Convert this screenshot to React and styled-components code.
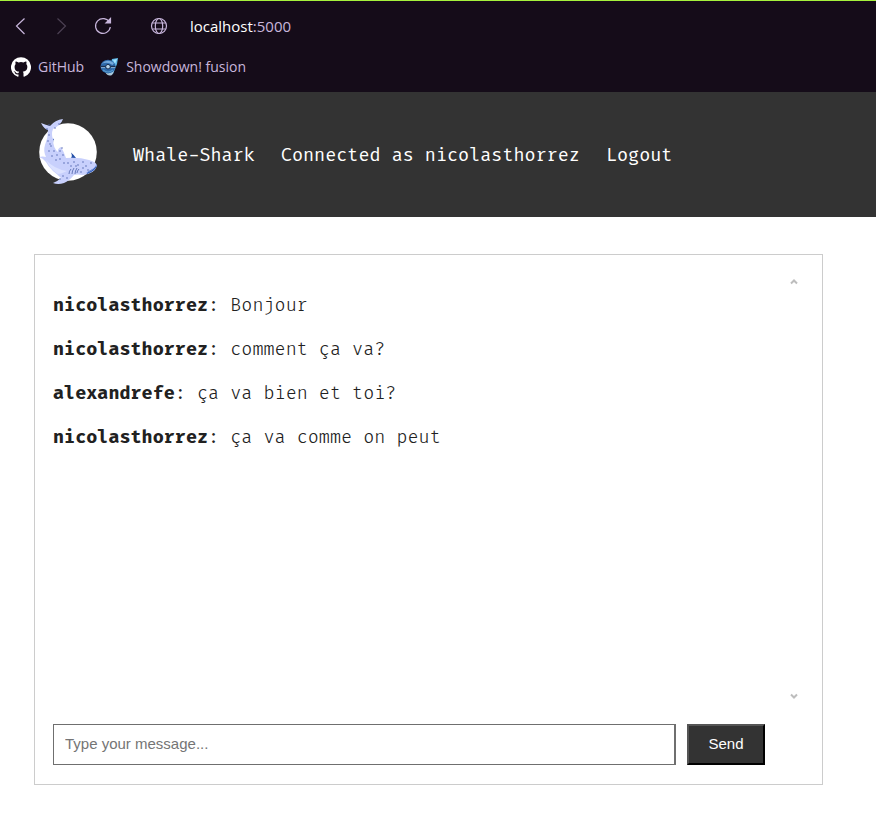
import React from "react";
import styled, { createGlobalStyle } from "styled-components";

const GlobalStyle = createGlobalStyle`
  * { box-sizing: border-box; }
  body { margin: 0; background: #fff; color: #212121; }
`;

const ui = `"Segoe UI", "Open Sans", "Noto Sans", sans-serif`;
const mono = `"Fira Code", "DejaVu Sans Mono", monospace`;

const Chrome = styled.div`
  background: #150c19;
  border-top: 1px solid #a6f23c;
  font-family: ${ui};
  font-size: 15px;
  line-height: 20px;
  color: #c8b6dc;
`;

const Toolbar = styled.div`
  display: flex;
  align-items: center;
  height: 50px;
  padding: 0 12px;
`;

const ToolButton = styled.button`
  display: flex;
  width: 18px;
  height: 18px;
  padding: 0;
  margin-right: ${(p) => p.$gap}px;
  border: 0;
  background: none;
  color: ${(p) => (p.disabled ? "#4c4153" : "#c8b6dc")};
`;

const Address = styled.div`
  margin-left: 4px;
  color: #c8b6dc;
`;

const Host = styled.span`
  color: #fff;
`;

const Bookmarks = styled.nav`
  display: flex;
  gap: 16px;
  height: 41px;
  padding: 6px 11px 0;
`;

const Bookmark = styled.a`
  display: flex;
  align-items: center;
  gap: 7px;
  height: 20px;
  color: inherit;
  font-size: 14px;
  text-decoration: none;
`;

const Header = styled.header`
  display: flex;
  align-items: center;
  min-height: 125px;
  padding: 0 34px;
  background: #333;
`;

const HomeLink = styled.a`
  display: flex;
  width: 74px;
  padding-bottom: 8px;
`;

const Menu = styled.nav`
  display: flex;
  gap: 26px;
  margin-left: 25px;
  padding-top: 2px;
  font-family: ${mono};
  font-feature-settings: "ss01";
  font-size: 18px;
  line-height: 24px;
  color: #fff;
`;

const MenuLink = styled.a`
  color: inherit;
  text-decoration: none;
`;

const Chat = styled.main`
  margin: 37px 53px 37px 34px;
  padding: 18px 18px 19px;
  border: 1px solid #ccc;
`;

const Messages = styled.section`
  display: flex;
  justify-content: space-between;
  height: 433px;
  margin-bottom: 18px;
`;

const MessageList = styled.ul`
  display: flex;
  flex-direction: column;
  gap: 20px;
  margin: 0;
  padding: 21px 0 0;
  list-style: none;
  font-family: ${mono};
  font-feature-settings: "ss01";
  font-size: 18px;
  font-weight: 300;
  line-height: 24px;
`;

const Author = styled.strong`
  font-weight: 700;
`;

const ScrollTrack = styled.div`
  display: flex;
  flex-direction: column;
  justify-content: space-between;
  width: 21px;
  padding: 3px 0 4px;
`;

const ScrollButton = styled.button`
  display: flex;
  justify-content: center;
  padding: 2px 0;
  border: 0;
  background: none;
  color: #bdbdbd;
`;

const Form = styled.form`
  display: flex;
  gap: 11px;
  padding-right: 39px;
  font-family: Arial, "Liberation Sans", sans-serif;
`;

const MessageInput = styled.input`
  flex: 1;
  min-width: 0;
  height: 41px;
  padding: 0 11px 2px;
  border: 1px solid #6f6f6f;
  border-right-width: 2px;
  border-radius: 0;
  background: #fff;
  font: inherit;
  font-size: 15px;
  &::placeholder { color: #757575; }
`;

const SendButton = styled.button`
  width: 78px;
  height: 41px;
  padding: 0 0 2px;
  border: 2px solid;
  border-color: #555 #000 #000 #555;
  border-radius: 0;
  background: #333;
  color: #fff;
  font: inherit;
  font-size: 15px;
`;

const Line = ({ children }) => (
  <svg width="18" height="18" viewBox="0 0 18 18" fill="none" stroke="currentColor" strokeWidth="1.2" aria-hidden="true">
    {children}
  </svg>
);

const GitHubMark = () => (
  <svg width="20" height="20" viewBox="0 0 24 24" fill="#fff" aria-hidden="true">
    <path d="M12 .3a12 12 0 0 0-3.8 23.4c.6.1.8-.3.8-.6v-2.2c-3.3.7-4-1.4-4-1.4-.6-1.4-1.4-1.8-1.4-1.8-1-.7.1-.7.1-.7 1.2 0 1.9 1.2 1.9 1.2 1 1.8 2.8 1.3 3.5 1 0-.8.4-1.3.7-1.6-2.7-.3-5.5-1.3-5.5-6 0-1.2.5-2.3 1.3-3.1-.2-.4-.6-1.6 0-3.2 0 0 1-.3 3.4 1.2a11.5 11.5 0 0 1 6 0c2.300-1.500 3.300-1.200 3.300-1.200.6 1.600.2 2.800 0 3.200.9.8 1.300 1.900 1.300 3.200 0 4.600-2.800 5.600-5.500 5.900.5.4.9 1 .9 2.200v3.300c0 .3.1.7.8.6A12 12 0 0 0 12 .3" />
  </svg>
);

const ShowdownMark = () => (
  <svg width="19" height="20" viewBox="0 0 19 20" aria-hidden="true">
    <path d="M12 2 18 1 17 7 13 17 8 18Z" fill="#5fb8e8" />
    <path d="M13 3 17 2 15 7Z" fill="#a4e2ff" />
    <path d="M5 15Q9 18 14 14L12 18Q8 20 5 15Z" fill="#a9c6d8" />
    <ellipse cx="8" cy="9.500" rx="7.500" ry="6.800" fill="#2e69aa" />
    <path d="M1.500 7Q7 1 14 6L12.500 8Q7 4 1.500 7Z" fill="#75aadc" />
    <path d="M.5 9.500h15" stroke="#1c3151" strokeWidth="1.300" />
    <path d="M1 10.600h4M11 10.600h4" stroke="#9fc4e2" strokeWidth=".8" />
    <circle cx="8" cy="9.700" r="2.300" fill="#b9d6ed" stroke="#1c3151" />
    <path d="M3 13Q8 17 13 13" fill="none" stroke="#579acb" strokeWidth="1.200" />
  </svg>
);

const spots = [
  [49, 125], [47, 129], [49, 135], [48, 141], [51, 146], [49, 151], [54, 151], [52, 156],
  [57, 155], [60, 151], [63, 155], [56, 160], [60, 159], [64, 163], [68, 163], [74, 162],
  [78, 165], [83, 162], [86, 166], [91, 163], [83, 168], [88, 170], [81, 172], [76, 166],
  [71, 166], [63, 176], [67, 178], [60, 179], [59, 124], [55, 128], [50, 144], [62, 148],
];

const SharkLogo = () => (
  <svg width="74" height="74" viewBox="34 114 74 74" role="img" aria-label="Whale-Shark">
    <circle cx="68" cy="152" r="28.800" fill="#fff" />
    <path d="M51 140q2-2 3-1-1 1-1 4Z" fill="#2b51b0" />
    <path d="M70 159Q73 157 71 152.500Q74 155 76 158L75 160Z" fill="#2450a8" />
    <path d="M41 123Q46 125 50 126Q55 120 63 119Q61 125 53 129Q51 134 53 139Q53 148 58 152Q57 149 61 147Q64 152 66 158Q79 157 89 160Q97 162 97 166Q94 174 83 175Q77 174 74 175Q69 181 64 183Q58 185 53 183Q58 181 61 178Q57 174 53 171Q48 166 46 162Q43 158 39 157Q43 156 46 157Q43 151 45 145Q48 138 48 130Q44 129 41 123Z" fill="#c8d0fc" />
    <path d="M46 160Q54 169 67 171Q61 174 58 174Q50 169 46 160Z" fill="#dbe1ff" />
    <path d="M97 164Q97 170 87 174Q86 172 91 170Q95 168 97 164Z" fill="#2456b5" />
    <path d="M86 173Q93 171 97 165" fill="none" stroke="#9eafea" strokeWidth=".7" />
    <path d="M71 169q-2 2-2 5M74 168q-2 3-2 6M77 168q-2 3-2 6M79 169q-2 2-2 4" fill="none" stroke="#4e62a8" strokeWidth=".8" />
    {spots.map(([x, y]) => <circle key={`${x}-${y}`} cx={x} cy={y} r=".75" fill="#5265af" />)}
  </svg>
);

const messages = [
  ["nicolasthorrez", "Bonjour"],
  ["nicolasthorrez", "comment ça va?"],
  ["alexandrefe", "ça va bien et toi?"],
  ["nicolasthorrez", "ça va comme on peut"],
];

export default function App() {
  return (
    <>
      <GlobalStyle />
      <Chrome>
        <Toolbar>
          <ToolButton $gap={23} aria-label="Back"><Line><path d="M12.500 1.500 4.500 9l8 8" /></Line></ToolButton>
          <ToolButton $gap={23} aria-label="Forward" disabled><Line><path d="m4.500 1.500 8 7.500-8 8" /></Line></ToolButton>
          <ToolButton $gap={38} aria-label="Reload">
            <Line><path d="M15.500 5.500A7.400 7.400 0 1 0 16.300 10" /><path d="M16.500 1.500v4.500H12Z" fill="currentColor" /></Line>
          </ToolButton>
          <ToolButton $gap={18} aria-label="Site information">
            <Line><circle cx="9" cy="9" r="7.500" /><ellipse cx="9" cy="9" rx="3.700" ry="7.500" /><path d="M2.300 6h13.400M2.300 12h13.400" /></Line>
          </ToolButton>
          <Address><Host>localhost</Host>:5000</Address>
        </Toolbar>
        <Bookmarks aria-label="Bookmarks">
          <Bookmark href="#github"><GitHubMark />GitHub</Bookmark>
          <Bookmark href="#showdown"><ShowdownMark />Showdown! fusion</Bookmark>
        </Bookmarks>
      </Chrome>
      <Header>
        <HomeLink href="#home"><SharkLogo /></HomeLink>
        <Menu aria-label="Main">
          <MenuLink href="#home">Whale-Shark</MenuLink>
          <span>Connected as nicolasthorrez</span>
          <MenuLink href="#logout">Logout</MenuLink>
        </Menu>
      </Header>
      <Chat>
        <Messages aria-label="Messages">
          <MessageList>
            {messages.map(([name, text]) => <li key={text}><Author>{name}</Author>: {text}</li>)}
          </MessageList>
          <ScrollTrack>
            <ScrollButton type="button" aria-label="Scroll up">
              <svg width="8" height="7" viewBox="0 0 8 7"><path d="m1 5.500 3-3 3 3" fill="none" stroke="currentColor" strokeWidth="2" /></svg>
            </ScrollButton>
            <ScrollButton type="button" aria-label="Scroll down">
              <svg width="8" height="7" viewBox="0 0 8 7"><path d="m1 1.500 3 3 3-3" fill="none" stroke="currentColor" strokeWidth="2" /></svg>
            </ScrollButton>
          </ScrollTrack>
        </Messages>
        <Form onSubmit={(e) => e.preventDefault()}>
          <MessageInput type="text" aria-label="Message" placeholder="Type your message..." />
          <SendButton type="submit">Send</SendButton>
        </Form>
      </Chat>
    </>
  );
}
